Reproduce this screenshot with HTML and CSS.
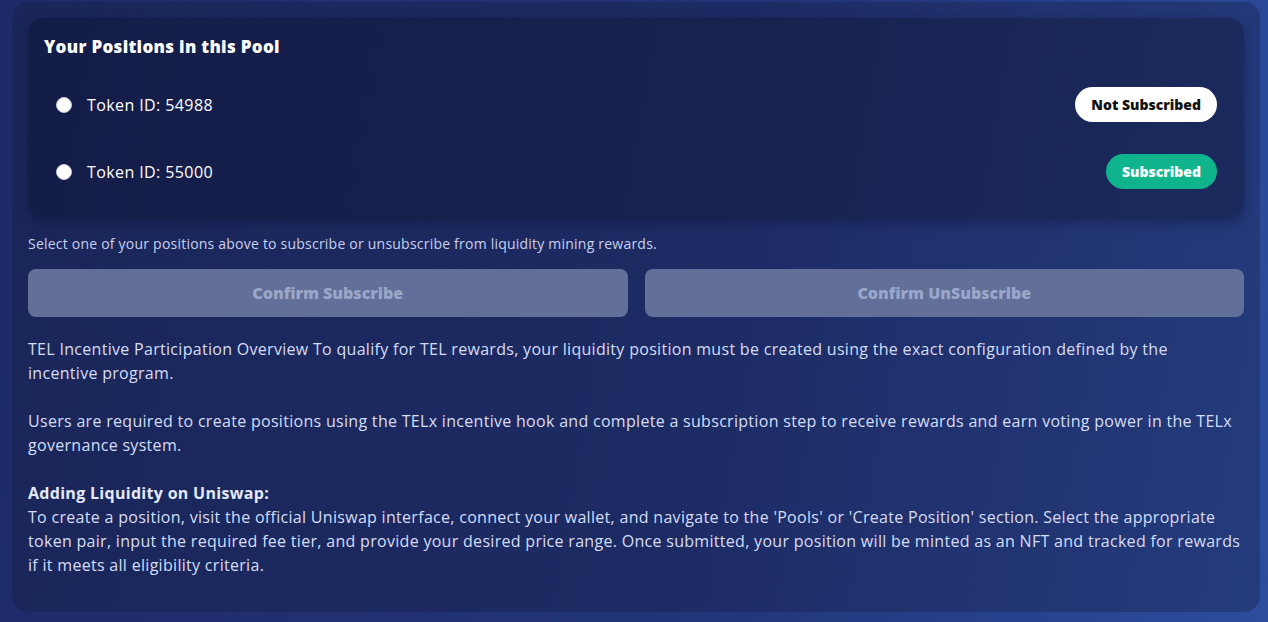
FILE: index.html
```html
<!DOCTYPE html>
<html lang="en">
<head>
    <meta charset="UTF-8">
    <meta name="viewport" content="width=device-width, initial-scale=1.0">
    <title>Positions</title>
    <link rel="stylesheet" href="styles.css">
</head>
<body>

    <div class="card">
        <div class="positions">
            <h2>Your Positions in this Pool</h2>
            <div class="row">
                <label><input type="radio" name="pos"> Token ID: 54988</label>
                <span class="badge badge-off">Not Subscribed</span>
            </div>
            <div class="row">
                <label><input type="radio" name="pos"> Token ID: 55000</label>
                <span class="badge badge-on">Subscribed</span>
            </div>
        </div>

        <p class="hint">Select one of your positions above to subscribe or unsubscribe from liquidity mining rewards.</p>

        <div class="actions">
            <button class="button" disabled>Confirm Subscribe</button>
            <button class="button" disabled>Confirm UnSubscribe</button>
        </div>

        <div class="info">
            <p class="intro">TEL Incentive Participation Overview To qualify for TEL rewards, your liquidity position must be created using the exact configuration defined by the incentive program.</p>
            <p>Users are required to create positions using the TELx incentive hook and complete a subscription step to receive rewards and earn voting power in the TELx governance system.</p>
            <p><strong>Adding Liquidity on Uniswap:</strong><br>
            To create a position, visit the official Uniswap interface, connect your wallet, and navigate to the 'Pools' or 'Create Position' section. Select the appropriate token pair, input the required fee tier, and provide your desired price range. Once submitted, your position will be minted as an NFT and tracked for rewards if it meets all eligibility criteria.</p>
        </div>
    </div>

</body>
</html>
```

FILE: styles.css
```css
body {
    margin: 0;
    height: 622px;
    font-family: "Open Sans", "Noto Sans", sans-serif;
    background: linear-gradient(100deg, #1e2a68 0%, #22357a 60%, #2b4d9c 100%);
    color: #d6ddf6;
    overflow: hidden;
}
.card {
    margin: 2px 8px 0 12px;
    height: 610px;
    box-sizing: border-box;
    padding: 16px 16px;
    border-radius: 16px;
    background: linear-gradient(100deg, #1a2659 0%, #1d2b64 55%, #243b7c 100%);
}
.positions {
    background: linear-gradient(100deg, #141d48 0%, #17224f 60%, #1b2a5d 100%);
    border-radius: 16px;
    padding: 17px 27px 13px 16px;
    box-shadow: 0 4px 12px rgba(8, 12, 36, 0.35);
}
h2 {
    margin: 0 0 13px;
    font-size: 17px;
    font-weight: 800;
    letter-spacing: 0.3px;
    color: #fff;
}
.row {
    display: flex;
    align-items: center;
    justify-content: space-between;
    height: 67px;
}
.row label {
    display: flex;
    align-items: center;
    gap: 15px;
    padding-left: 12px;
    font-size: 16px;
    letter-spacing: 0.4px;
    color: #fff;
}
.row input {
    margin: 0;
    width: 16px;
    height: 16px;
    appearance: none;
    border-radius: 50%;
    background: #fff;
    border: 1px solid #c9cbd4;
}
.badge {
    padding: 0 16px;
    height: 35px;
    line-height: 35px;
    border-radius: 18px;
    font-size: 14px;
    font-weight: 800;
}
.badge-off {
    background: #fff;
    color: #111;
}
.badge-on {
    background: #10b48c;
    color: #fff;
}
.hint {
    margin: 16px 0 16px;
    font-size: 14px;
    letter-spacing: 0.22px;
    color: #c8d0ee;
}
.actions {
    display: flex;
    gap: 17px;
}
.button {
    flex: 1;
    height: 48px;
    border: none;
    border-radius: 8px;
    background: #616f99;
    color: #9ba7c9;
    font-family: inherit;
    font-size: 16px;
    font-weight: 800;
}
.info {
    margin-top: 20px;
    font-size: 16px;
    line-height: 24px;
    letter-spacing: 0.3px;
}
.info p {
    margin: 0 0 24px;
}
.info .intro {
    padding-right: 12px;
}
.info strong {
    color: #e4e9fa;
}
```
